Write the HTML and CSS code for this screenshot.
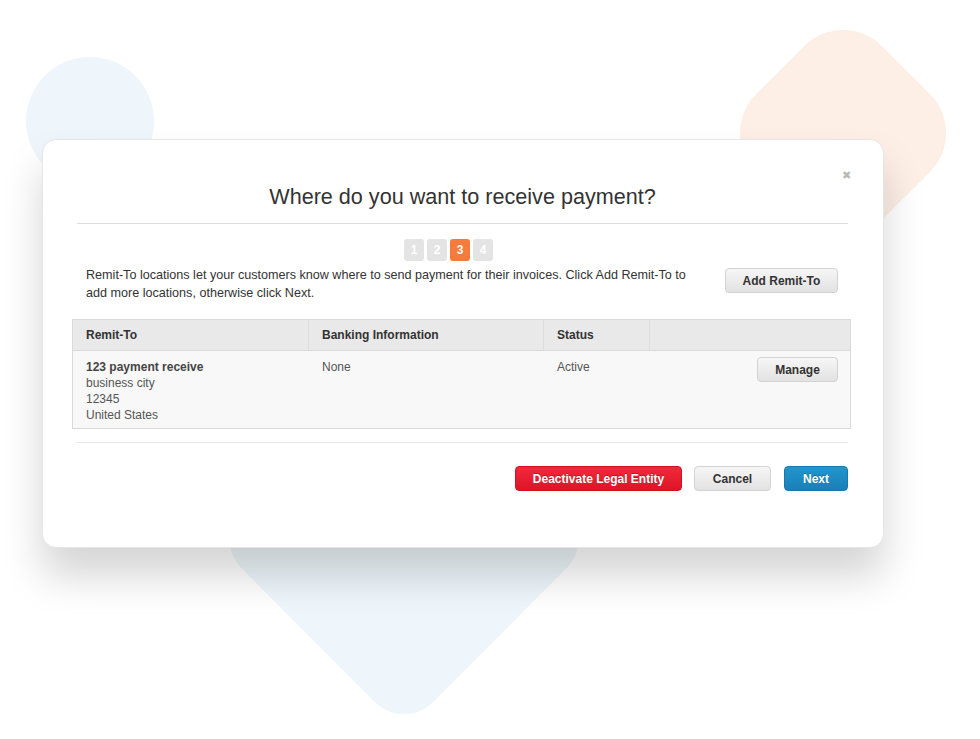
FILE: index.html
```html
<!DOCTYPE html>
<html>
<head>
<meta charset="utf-8">
<link rel="stylesheet" href="styles.css">
</head>
<body>
<div class="stage">
  <div class="blob blob-circle"></div>
  <div class="blob blob-peach"></div>
  <div class="blob blob-diamond"></div>

  <div class="modal">
    <span class="close">&#x2716;</span>
    <h1 class="title">Where do you want to receive payment?</h1>

    <div class="steps">
      <span class="step">1</span>
      <span class="step">2</span>
      <span class="step active">3</span>
      <span class="step">4</span>
    </div>

    <div class="intro">
      <p class="intro-text">Remit-To locations let your customers know where to send payment for their invoices. Click Add Remit-To to add more locations, otherwise click Next.</p>
      <button class="btn btn-gray btn-add">Add Remit-To</button>
    </div>

    <div class="table">
      <div class="thead">
        <div class="th c1">Remit-To</div>
        <div class="th c2">Banking Information</div>
        <div class="th c3">Status</div>
        <div class="th c4"></div>
      </div>
      <div class="trow">
        <div class="td c1">
          <strong>123 payment receive</strong><br>
          business city<br>
          12345<br>
          United States
        </div>
        <div class="td c2">None</div>
        <div class="td c3">Active</div>
        <div class="td c4"><button class="btn btn-gray btn-manage">Manage</button></div>
      </div>
    </div>

    <div class="footer">
      <button class="btn btn-red">Deactivate Legal Entity</button>
      <button class="btn btn-gray btn-cancel">Cancel</button>
      <button class="btn btn-blue">Next</button>
    </div>
  </div>
</div>
</body>
</html>
```

FILE: styles.css
```css
* { box-sizing: border-box; }

html, body {
  margin: 0;
  padding: 0;
  background: #ffffff;
  font-family: "Liberation Sans", Arial, sans-serif;
}

.stage {
  position: relative;
  width: 980px;
  height: 739px;
  overflow: hidden;
  padding: 139px 0 0 42px;
}

.blob {
  position: absolute;
  z-index: 0;
}

.blob-circle {
  left: 26px;
  top: 57px;
  width: 128px;
  height: 128px;
  border-radius: 50%;
  background: #eef6fb;
}

.blob-peach {
  left: 754px;
  top: 44px;
  width: 178px;
  height: 178px;
  border-radius: 55px;
  background: #fdefe6;
  transform: rotate(45deg);
}

.blob-diamond {
  left: 269px;
  top: 405px;
  width: 270px;
  height: 270px;
  border-radius: 40px;
  background: #eef6fb;
  transform: rotate(45deg);
}

.modal {
  position: relative;
  z-index: 1;
  width: 842px;
  height: 409px;
  background: #ffffff;
  border: 1px solid #e6e6e6;
  border-radius: 14px;
  box-shadow: 0 28px 40px rgba(0, 0, 0, 0.17);
  padding: 0 35px 0 34px;
}

.close {
  position: absolute;
  right: 32px;
  top: 28px;
  font-size: 11px;
  color: #b8b8b8;
  line-height: 14px;
}

.title {
  margin: 0;
  padding: 44px 0 13px;
  border-bottom: 1px solid #dcdcdc;
  text-align: center;
  font-weight: normal;
  font-size: 21.6px;
  line-height: 26px;
  color: #333333;
}

.steps {
  display: flex;
  justify-content: center;
  gap: 3px;
  margin-top: 15px;
  padding-right: 28px;
}

.step {
  width: 20px;
  height: 22px;
  border-radius: 3px;
  background: #e4e4e4;
  color: #ffffff;
  font-size: 12px;
  font-weight: bold;
  line-height: 22px;
  text-align: center;
}

.step.active {
  background: #f47b3b;
}

.intro {
  display: flex;
  align-items: flex-start;
  justify-content: space-between;
  margin-top: 5px;
  padding-left: 9px;
  padding-right: 10px;
}

.intro-text {
  margin: 0;
  width: 620px;
  font-size: 12.6px;
  line-height: 18px;
  color: #333333;
}

.btn {
  font-family: "Liberation Sans", Arial, sans-serif;
  font-weight: bold;
  font-size: 12px;
  border-radius: 4px;
  height: 25px;
  padding: 0;
  cursor: pointer;
}

.btn-gray {
  background: linear-gradient(#f6f6f6, #e2e2e2);
  border: 1px solid #d2d2d2;
  color: #333333;
}

.btn-add {
  width: 113px;
  margin-top: 2px;
}

.table {
  margin: 17px -3px 0 -5px;
  border: 1px solid #d9d9d9;
  font-size: 12px;
  color: #555555;
}

.thead {
  display: flex;
  height: 31px;
  background: #e9e9e9;
  border-bottom: 1px solid #d9d9d9;
}

.th {
  font-weight: bold;
  color: #333333;
  line-height: 30px;
  padding-left: 13px;
  border-right: 1px solid #dedede;
}

.th.c4 { border-right: none; }

.trow {
  display: flex;
  height: 77px;
  background: #f8f8f8;
}

.c1 { width: 236px; }
.c2 { width: 235px; }
.c3 { width: 106px; }
.c4 { flex: 1; }

.td {
  padding: 8px 0 0 13px;
  line-height: 16px;
}

.td strong {
  color: #444444;
}

.td.c4 {
  display: flex;
  justify-content: flex-end;
  padding: 6px 12px 0 0;
}

.btn-manage {
  width: 81px;
}

.footer {
  display: flex;
  justify-content: flex-end;
  gap: 12px;
  margin-top: 13px;
  padding-top: 23px;
  border-top: 1px solid #e6e6e6;
}

.btn-red {
  width: 167px;
  background: linear-gradient(#f12a3a, #dd1426);
  border: 1px solid #d1111f;
  color: #ffffff;
  text-shadow: 0 -1px 0 rgba(0, 0, 0, 0.25);
}

.btn-cancel {
  width: 77px;
}

.btn-blue {
  width: 64px;
  margin-left: 1px;
  background: linear-gradient(#2196cf, #1a7fb7);
  border: 1px solid #1878ae;
  color: #ffffff;
  text-shadow: 0 -1px 0 rgba(0, 0, 0, 0.25);
}
```
